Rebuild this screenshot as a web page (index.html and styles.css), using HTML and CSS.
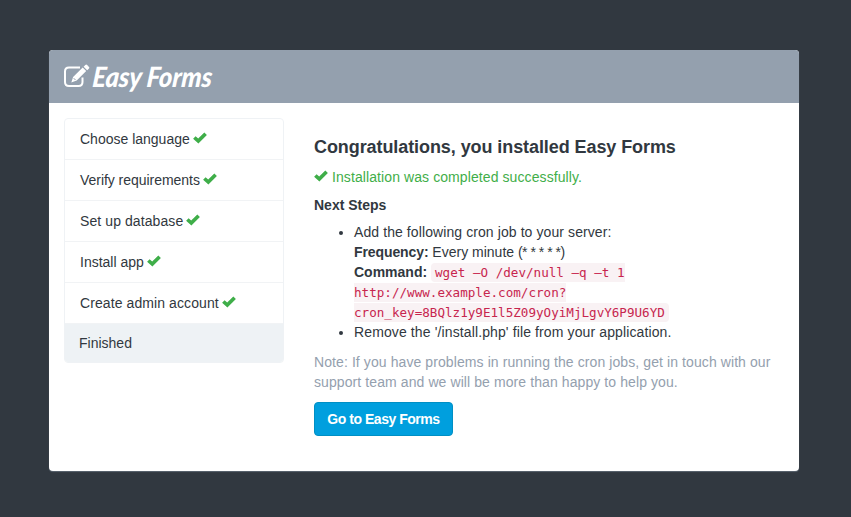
FILE: index.html
```html
<!DOCTYPE html>
<html lang="en">
<head>
<meta charset="utf-8">
<title>Easy Forms</title>
<link rel="stylesheet" href="styles.css">
</head>
<body>
<svg width="0" height="0" class="defs" aria-hidden="true">
  <symbol id="check" viewBox="0 0 14 12"><path d="M0.1 6.8 2.6 4.2 5.2 6.500 11.300 0.4 13.900 2.900 5.400 11.600Z"/></symbol>
</svg>
<main class="panel">
  <header class="header">
    <svg class="logo" viewBox="0 0 26 24" aria-hidden="true">
      <path class="frame" d="M16 3.5H5Q1 3.5 1 7.5V18Q1 22 5 22H14.500Q18.500 22 18.500 18V13.500"/>
      <path d="M7.300 18.500 9.100 12.900 18.700 3.600 22.200 7.100 12.700 16.600ZM19.600 2.700 21.300 1Q22.200.2 23.100 1L25 2.900Q25.800 3.700 25 4.600L23.200 6.200Z"/>
      <path class="cut" d="M9.700 14.200 11.500 16"/>
    </svg>
    <span class="brand">Easy Forms</span>
  </header>
  <div class="body">
    <ul class="steps">
      <li><span>Choose language</span><svg class="check"><use href="#check"/></svg></li>
      <li><span class="tight">Verify requirements</span><svg class="check"><use href="#check"/></svg></li>
      <li><span class="loose">Set up database</span><svg class="check"><use href="#check"/></svg></li>
      <li><span>Install app</span><svg class="check"><use href="#check"/></svg></li>
      <li><span class="loose">Create admin account</span><svg class="check"><use href="#check"/></svg></li>
      <li class="active">Finished</li>
    </ul>
    <section class="content">
      <h1>Congratulations, you installed Easy Forms</h1>
      <p class="success"><svg class="check"><use href="#check"/></svg><span>Installation was completed successfully.</span></p>
      <p><strong>Next Steps</strong></p>
      <ul class="todo">
        <li><span class="loose">Add the following cron job to your server:</span><br>
          <strong class="label">Frequency:</strong> Every minute <span class="stars">(* * * * *)</span><br>
          <strong>Command:</strong> <code>wget –O /dev/null –q –t 1<br>http://www.example.com/cron?<br>cron_key=8BQlz1y9E1l5Z09yOyiMjLgvY6P9U6YD</code></li>
        <li><span class="looser">Remove the '/install.php' file from your application.</span></li>
      </ul>
      <p class="note">Note: If you have problems in running the cron jobs, get in touch with our<br>support team and we will be more than happy to help you.</p>
      <a class="button">Go to Easy Forms</a>
    </section>
  </div>
</main>
</body>
</html>
```
FILE: styles.css
```css
* { box-sizing: border-box; }
body {
  margin: 0;
  padding: 50px 0 0 49px;
  height: 517px;
  background: #313840;
  color: #313840;
  font: 14px/20px "Liberation Sans", Arial, sans-serif;
}
.defs { display: block; }
.panel {
  width: 750px;
  height: 421px;
  background: #fff;
  border-radius: 4px;
  box-shadow: 0 1px 1px #5b6570;
  overflow: hidden;
}
.header {
  display: flex;
  height: 53px;
  padding: 14px 0 0 15px;
  background: #94a0ae;
  color: #fff;
}
.logo { width: 26px; height: 24px; fill: #fff; }
.frame { fill: none; stroke: #fff; stroke-width: 2; }
.cut { stroke: #94a0ae; stroke-width: 1; }
.brand {
  margin-left: 2px;
  font: italic 900 28px/24px Lato, sans-serif;
  white-space: nowrap;
  transform: scaleX(.91) skewX(-6deg);
  transform-origin: left center;
}
.body { display: flex; padding: 15px 15px 0; }
ul { margin: 0; padding: 0; }
.steps {
  width: 220px;
  height: 245px;
  list-style: none;
  border: 1px solid #eff2f5;
  border-radius: 4px;
  overflow: hidden;
}
.steps li {
  display: flex;
  align-items: center;
  height: 41px;
  padding: 0 15px;
  border-bottom: 1px solid #f1f3f5;
}
.steps .active { padding-left: 14px; padding-bottom: 3px; background: #eef2f5; border: 0; }
.check { width: 14px; height: 12px; flex: none; fill: #3fae49; }
.steps .check { margin: -3px 0 0 3px; }
.tight { letter-spacing: -.04px; }
.loose { letter-spacing: .09px; }
.looser { letter-spacing: .12px; }
.label { letter-spacing: -.1px; }
.stars { letter-spacing: -.5px; }
.content { padding: 18px 0 0 30px; flex: 1; }
h1 { margin: 0 0 9px; font-size: 18px; line-height: 22px; letter-spacing: -.08px; }
p { margin: 0 0 8px; }
.success { display: flex; align-items: center; color: #3fae49; letter-spacing: .09px; }
.success .check { margin: -2px 4px 0 0; }
.todo { padding-left: 40px; margin: -1px 0 10px; }
code {
  padding: 2px 4px;
  border-radius: 4px;
  background: #f9f2f4;
  color: #c7254e;
  font: 12.6px "DejaVu Sans Mono", monospace;
}
.note { margin-bottom: 10px; color: #94a0ae; white-space: nowrap; letter-spacing: .09px; }
.button {
  display: block;
  width: 139px;
  height: 34px;
  border: 1px solid #008fc4;
  border-radius: 4px;
  background: #009fde;
  color: #fff;
  font-weight: bold;
  line-height: 32px;
  text-align: center;
  letter-spacing: -.47px;
}
```
